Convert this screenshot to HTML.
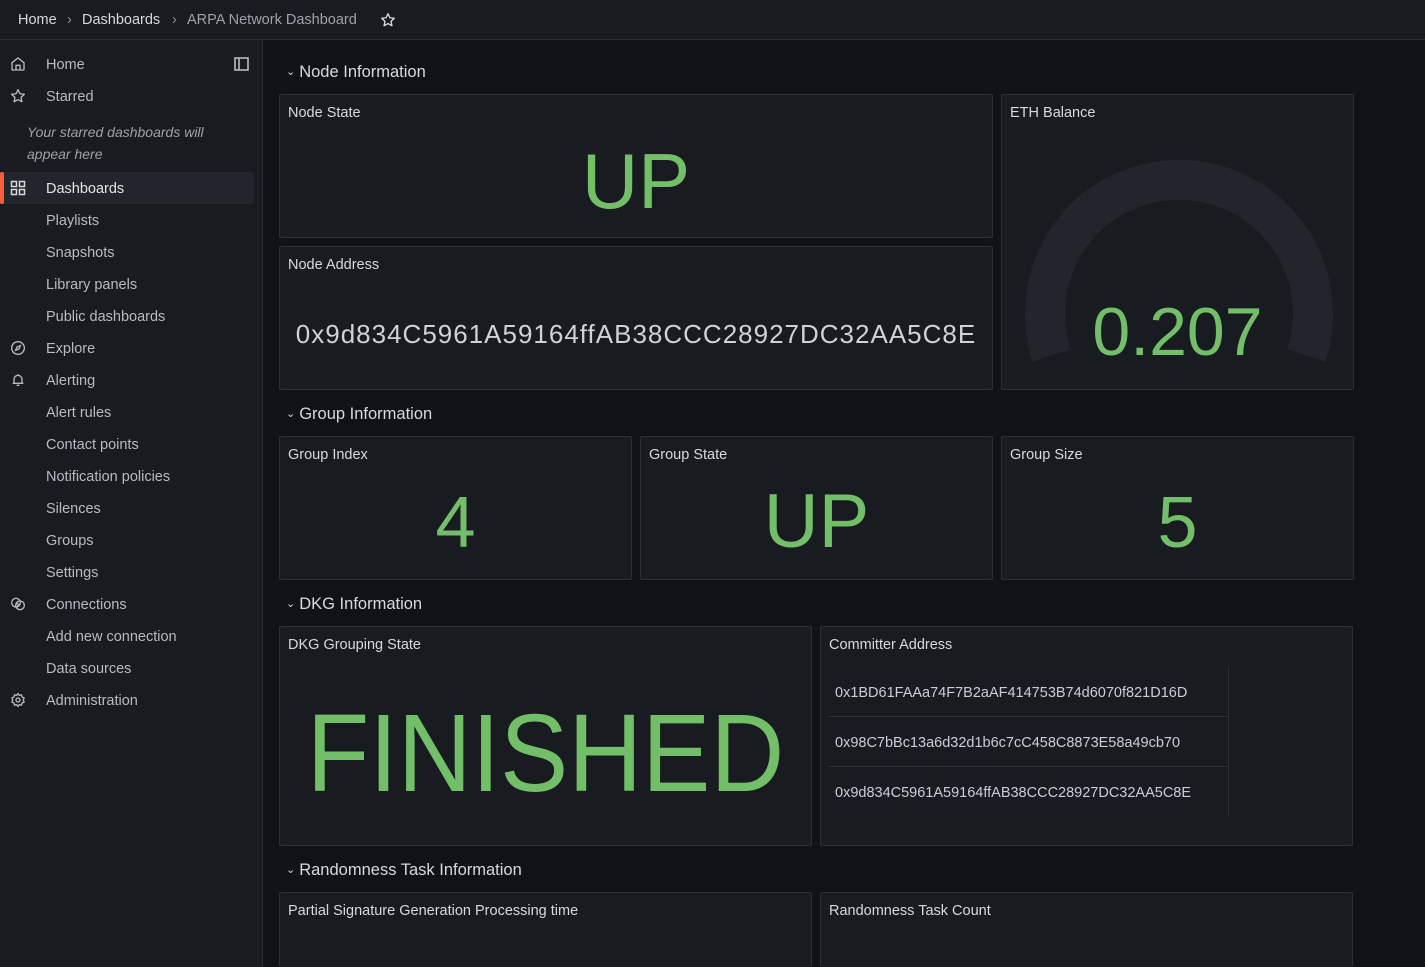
<!DOCTYPE html>
<html><head><meta charset="utf-8"><style>
*{box-sizing:border-box;margin:0;padding:0}
html{width:1425px;height:967px;overflow:hidden}
body{width:1425px;height:967px;overflow:hidden;background:#111217;font-family:"Liberation Sans",sans-serif;color:#ccccdc;position:relative}
.top{position:absolute;left:0;top:0;width:1425px;height:40px;background:#181b1f;border-bottom:1px solid #2c2f35}
.bc{position:absolute;top:12px;font-size:14.5px;color:#d8d9e0}
.side{position:absolute;left:0;top:40px;width:263px;height:927px;background:#181b1f;border-right:1px solid #2c2f35}
.it{position:absolute;left:46px;font-size:14.5px;color:#b9bac4}
.ic{position:absolute;left:10px;width:16px;height:16px}
.hl{position:absolute;left:0;top:132px;width:254px;height:32px;background:#22252b}
.hl:before{content:"";position:absolute;left:0;top:0;width:4px;height:32px;background:#f55f3e;border-radius:2px}
.p{position:absolute;background:#181b1f;border:1px solid #2c2f35;border-radius:2px;overflow:hidden}
.pt{position:absolute;left:8px;top:10px;font-size:14.5px;color:#d8d9e0}
.row{position:absolute;left:286px;font-size:16.5px;color:#d8d9e0}
.row span{font-size:11px;margin-right:4px;position:relative;top:-2px}
.g{color:#73bf69;position:absolute;text-align:center;width:100%;line-height:1}
.tr{position:absolute;left:8px;width:400px;height:50px;border-bottom:1px solid #2c2f35;font-size:14.5px;color:#ccccdc;padding:18px 0 0 6px}
</style></head><body>
<div class="top">
<div class="bc" style="left:18px">Home</div>
<div class="bc" style="left:67px;color:#8e8e99">›</div>
<div class="bc" style="left:82px">Dashboards</div>
<div class="bc" style="left:172px;color:#8e8e99">›</div>
<div class="bc" style="left:187px;color:#a0a1ab">ARPA Network Dashboard</div>
<svg style="position:absolute;left:380px;top:12px" width="16" height="16" viewBox="0 0 24 24" fill="none" stroke="#d8d9e0" stroke-width="2" stroke-linejoin="round"><path d="M12 2.5l2.9 6.1 6.6.8-4.9 4.6 1.3 6.6L12 17.3l-5.9 3.3 1.3-6.6-4.9-4.6 6.6-.8z"/></svg>
</div>
<div class="side">
<svg class="ic" style="top:16px" viewBox="0 0 24 24" fill="none" stroke="#b9bac4" stroke-width="2"><path d="M3 10l9-7 9 7v10a1 1 0 0 1-1 1H4a1 1 0 0 1-1-1z M9 21v-7h6v7"/></svg>
<div class="it" style="top:17px">Home</div>
<svg style="position:absolute;left:234px;top:17px" width="15" height="14" viewBox="0 0 15 14" fill="none" stroke="#b9bac4" stroke-width="1.6"><rect x="1" y="1" width="13" height="12"/><path d="M5 1v12"/></svg>
<svg class="ic" style="top:48px" viewBox="0 0 24 24" fill="none" stroke="#b9bac4" stroke-width="2" stroke-linejoin="round"><path d="M12 2.5l2.9 6.1 6.6.8-4.9 4.6 1.3 6.6L12 17.3l-5.9 3.3 1.3-6.6-4.9-4.6 6.6-.8z"/></svg>
<div class="it" style="top:49px">Starred</div>
<div style="position:absolute;left:27px;top:81px;font-size:14px;font-style:italic;color:#a0a1ab;line-height:22px;width:210px">Your starred dashboards will appear here</div>
<div class="hl"></div>
<svg class="ic" style="top:140px" viewBox="0 0 16 16" fill="none" stroke="#d8d9e0" stroke-width="1.5"><rect x="1.5" y="1.5" width="5" height="5"/><rect x="9.5" y="1.5" width="5" height="5"/><rect x="1.5" y="9.5" width="5" height="5"/><rect x="9.5" y="9.5" width="5" height="5"/></svg>
<div class="it" style="top:141px;color:#e4e5ea">Dashboards</div>
<div class="it" style="top:173px">Playlists</div>
<div class="it" style="top:205px">Snapshots</div>
<div class="it" style="top:237px">Library panels</div>
<div class="it" style="top:269px">Public dashboards</div>
<svg class="ic" style="top:300px" viewBox="0 0 24 24" fill="none" stroke="#b9bac4" stroke-width="2"><circle cx="12" cy="12" r="9.5"/><path d="M15.5 8.5l-2 5-5 2 2-5z"/></svg>
<div class="it" style="top:301px">Explore</div>
<svg class="ic" style="top:332px" viewBox="0 0 24 24" fill="none" stroke="#b9bac4" stroke-width="2"><path d="M6 17V11a6 6 0 0 1 12 0v6H6zM4 17h16M10 20h4M12 3v2"/></svg>
<div class="it" style="top:333px">Alerting</div>
<div class="it" style="top:365px">Alert rules</div>
<div class="it" style="top:397px">Contact points</div>
<div class="it" style="top:429px">Notification policies</div>
<div class="it" style="top:461px">Silences</div>
<div class="it" style="top:493px">Groups</div>
<div class="it" style="top:525px">Settings</div>
<svg class="ic" style="top:556px" viewBox="0 0 24 24" fill="none" stroke="#b9bac4" stroke-width="2"><circle cx="9" cy="10" r="6.5"/><circle cx="15" cy="14" r="6.5"/><path d="M9 13l3-3M11 15l3-3"/></svg>
<div class="it" style="top:557px">Connections</div>
<div class="it" style="top:589px">Add new connection</div>
<div class="it" style="top:621px">Data sources</div>
<svg class="ic" style="top:652px" viewBox="0 0 24 24" fill="none" stroke="#b9bac4" stroke-width="2"><circle cx="12" cy="12" r="3"/><path d="M12 2.5l2 2.5 3.2-.6.9 3.1 3 1.4-1.2 3.1 1.2 3.1-3 1.4-.9 3.1-3.2-.6-2 2.5-2-2.5-3.2.6-.9-3.1-3-1.4L4.1 12 2.9 8.9l3-1.4.9-3.1 3.2.6z"/></svg>
<div class="it" style="top:653px">Administration</div>
</div>

<div class="row" style="top:63px"><span>⌄</span>Node Information</div>
<div class="p" style="left:279px;top:94px;width:714px;height:144px"><div class="pt">Node State</div><div class="g" style="top:47px;font-size:78px">UP</div></div>
<div class="p" style="left:279px;top:246px;width:714px;height:144px"><div class="pt">Node Address</div><div class="g" style="top:74px;font-size:26px;color:#d0d1d9;letter-spacing:1px">0x9d834C5961A59164ffAB38CCC28927DC32AA5C8E</div></div>
<div class="p" style="left:1001px;top:94px;width:353px;height:296px"><div class="pt">ETH Balance</div>
<svg style="position:absolute;left:0;top:0" width="353" height="296"><path d="M49.6 260.4 A134 134 0 1 1 304.4 260.4" fill="none" stroke="#22252b" stroke-width="40"/></svg>
<div class="g" style="top:203px;font-size:68px">0.207</div></div>

<div class="row" style="top:405px"><span>⌄</span>Group Information</div>
<div class="p" style="left:279px;top:436px;width:353px;height:144px"><div class="pt">Group Index</div><div class="g" style="top:50px;font-size:72px">4</div></div>
<div class="p" style="left:640px;top:436px;width:353px;height:144px"><div class="pt">Group State</div><div class="g" style="top:47px;font-size:76px">UP</div></div>
<div class="p" style="left:1001px;top:436px;width:353px;height:144px"><div class="pt">Group Size</div><div class="g" style="top:50px;font-size:72px">5</div></div>

<div class="row" style="top:595px"><span>⌄</span>DKG Information</div>
<div class="p" style="left:279px;top:626px;width:533px;height:220px"><div class="pt">DKG Grouping State</div><div class="g" style="top:72px;font-size:110px;transform:scaleX(0.93)">FINISHED</div></div>
<div class="p" style="left:820px;top:626px;width:533px;height:220px"><div class="pt">Committer Address</div>
<div style="position:absolute;left:407px;top:40px;width:1px;height:150px;background:#2c2f35"></div>
<div class="tr" style="top:40px">0x1BD61FAAa74F7B2aAF414753B74d6070f821D16D</div>
<div class="tr" style="top:90px">0x98C7bBc13a6d32d1b6c7cC458C8873E58a49cb70</div>
<div class="tr" style="top:140px;border-bottom:none">0x9d834C5961A59164ffAB38CCC28927DC32AA5C8E</div>
</div>

<div class="row" style="top:861px"><span>⌄</span>Randomness Task Information</div>
<div class="p" style="left:279px;top:892px;width:533px;height:75px;border-bottom:none"><div class="pt">Partial Signature Generation Processing time</div></div>
<div class="p" style="left:820px;top:892px;width:533px;height:75px;border-bottom:none"><div class="pt">Randomness Task Count</div></div>
</body></html>
